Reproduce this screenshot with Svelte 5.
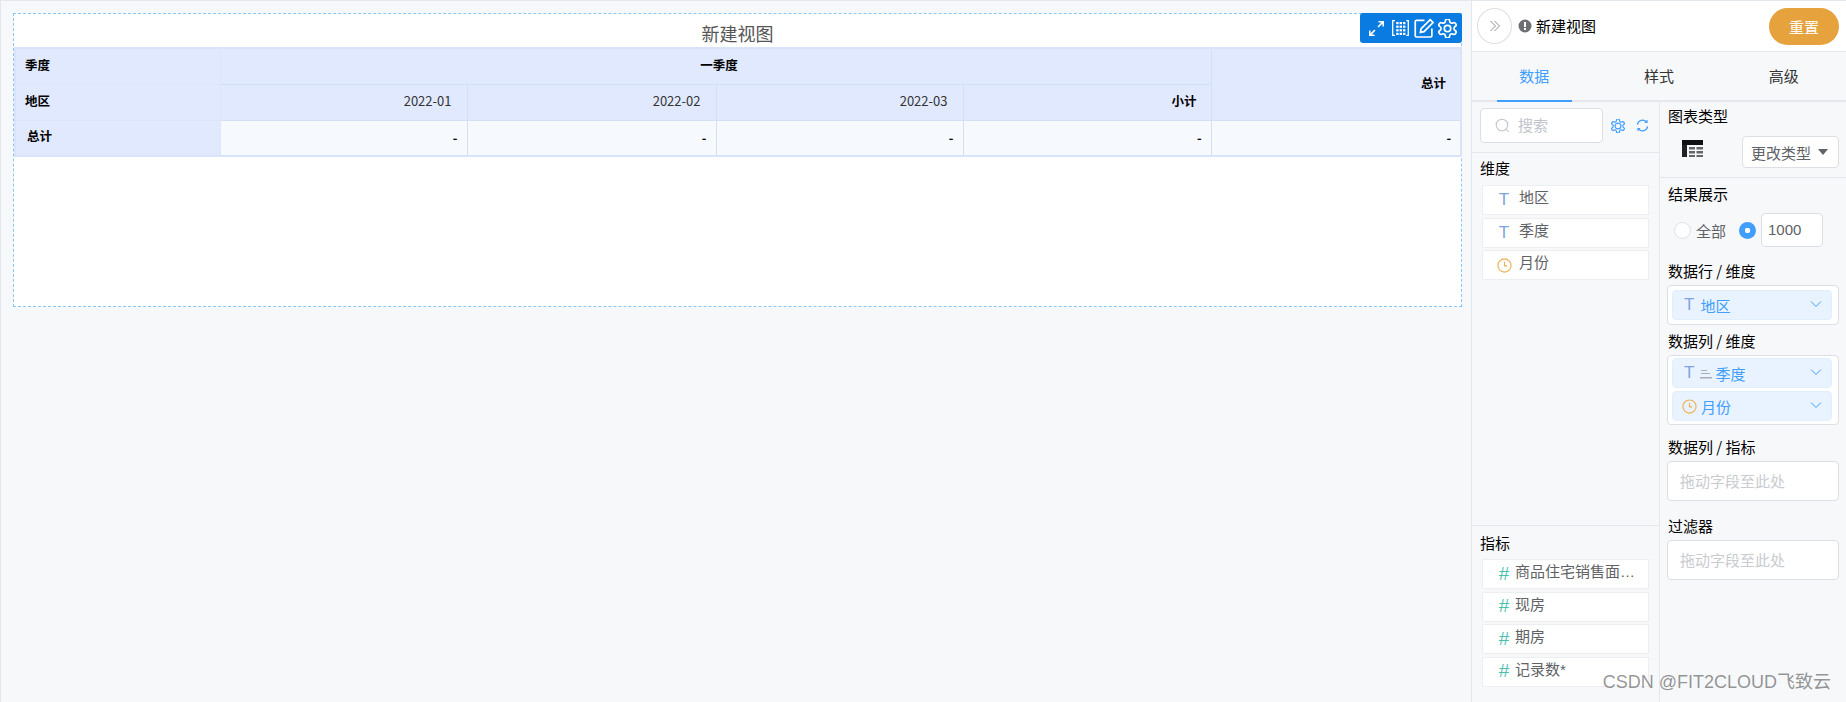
<script>
  const months = ['2022-01', '2022-02', '2022-03'];
  const widths = [205, 247, 249, 247, 248, 250];
  const gearPath =
    'M12.22 2h-.44a2 2 0 0 0-2 2v.18a2 2 0 0 1-1 1.73l-.43.25a2 2 0 0 1-2 0l-.15-.08a2 2 0 0 0-2.73.73l-.22.38a2 2 0 0 0 .73 2.73l.15.1a2 2 0 0 1 1 1.72v.51a2 2 0 0 1-1 1.74l-.15.09a2 2 0 0 0-.73 2.73l.22.38a2 2 0 0 0 2.73.73l.15-.08a2 2 0 0 1 2 0l.43.25a2 2 0 0 1 1 1.73V20a2 2 0 0 0 2 2h.44a2 2 0 0 0 2-2v-.18a2 2 0 0 1 1-1.73l.43-.25a2 2 0 0 1 2 0l.15.08a2 2 0 0 0 2.73-.73l.22-.39a2 2 0 0 0-.73-2.73l-.15-.08a2 2 0 0 1-1-1.74v-.5a2 2 0 0 1 1-1.74l.15-.09a2 2 0 0 0 .73-2.73l-.22-.38a2 2 0 0 0-2.73-.73l-.15.08a2 2 0 0 1-2 0l-.43-.25a2 2 0 0 1-1-1.73V4a2 2 0 0 0-2-2z';
  const dimensions = [
    { type: 'text', name: '地区' },
    { type: 'text', name: '季度' },
    { type: 'time', name: '月份' },
  ];
  const measures = ['商品住宅销售面积(万)', '现房', '期房', '记录数*'];
  // dots of the small table icon in the toolbar
  const dots = [];
  for (const y of [2, 5.6, 9.2, 12.8]) for (const x of [4.2, 7.6, 11]) dots.push({ x, y });
</script>

{#snippet clock(size)}
  <svg class="clock" width={size} height={size} viewBox="0 0 16 16" fill="none" stroke="#f0ad4e" stroke-width="1.2">
    <circle cx="8" cy="8" r="7" />
    <path d="M8 4v4.400h3" />
  </svg>
{/snippet}

{#snippet chevron()}
  <svg class="chev" width="12" height="8" viewBox="0 0 12 8" fill="none" stroke="#409eff" stroke-width="1">
    <path d="M1 1.500l5 5 5-5" />
  </svg>
{/snippet}

<div class="page">
  <main class="canvas">
    <section class="view">
      <div class="toolbar">
        <svg class="tb-expand" width="15" height="15" viewBox="1.500 1.500 15 15" fill="none" stroke="#fff" stroke-width="1.700">
          <path d="M10.500 7.500L15.500 2.500M11 2.200h4.800V7M7.500 10.500L2.500 15.500M2.200 11v4.800H7" />
        </svg>
        <svg class="tb-grid" width="17" height="16" viewBox="0 0 17 16" fill="none" stroke="#fff" stroke-width="1.300">
          <path d="M3 .7H.7v14.600H3M14.300 .7h2v14.600h-2" />
          {#each dots as d}<rect x={d.x} y={d.y} width="2.400" height="2.200" fill="#fff" stroke="none" />{/each}
        </svg>
        <svg class="tb-edit" width="21" height="21" viewBox="0 0 22 22" fill="none" stroke="#fff" stroke-width="1.800">
          <path d="M11 2.500H2.500a1.200 1.200 0 0 0-1.200 1.200v15a1.200 1.200 0 0 0 1.200 1.200h15a1.200 1.200 0 0 0 1.200-1.200V11" />
          <path d="M7.500 11.200L17 1.800l3 3-9.500 9.500-3.800.8z" />
        </svg>
        <svg class="tb-gear" width="19" height="19" viewBox="2 2 20 20" fill="none" stroke="#fff" stroke-width="1.800">
          <path d={gearPath} />
          <circle cx="12" cy="12" r="3.400" />
        </svg>
      </div>
      <h1>新建视图</h1>
      <table>
        <colgroup>
          {#each widths as w}<col style="width:{w}px" />{/each}
        </colgroup>
        <tbody>
          <tr>
            <th class="lead">季度</th>
            <th colspan="4" class="center">一季度</th>
            <th rowspan="2">总计</th>
          </tr>
          <tr>
            <th class="lead">地区</th>
            {#each months as m}<td class="head">{m}</td>{/each}
            <th>小计</th>
          </tr>
          <tr>
            <th class="lead total">总计</th>
            {#each widths.slice(1) as _}<td class="val">-</td>{/each}
          </tr>
        </tbody>
      </table>
    </section>
  </main>

  <aside class="panel">
    <header class="top">
      <button class="toggle" aria-label="收起">
        <svg width="12" height="12" viewBox="0 0 12 12" fill="none" stroke="#8a8f99" stroke-width="1">
          <path d="M1.500 1l5 5-5 5M5.500 1l5 5-5 5" />
        </svg>
      </button>
      <svg class="warn" width="14" height="14" viewBox="0 0 14 14">
        <circle cx="7" cy="7" r="6.500" fill="#6d6f73" />
        <rect x="6" y="3" width="2" height="5" fill="#fff" />
        <rect x="6" y="9" width="2" height="2" fill="#fff" />
      </svg>
      <span class="view-name">新建视图</span>
      <button class="reset">重置</button>
    </header>

    <nav class="tabs">
      <div class="tab active">数据</div>
      <div class="tab">样式</div>
      <div class="tab">高级</div>
    </nav>

    <div class="cols">
      <div class="fields">
        <div class="search-row">
          <div class="search">
            <svg width="15" height="15" viewBox="0 0 15 15" fill="none" stroke="#c0c4cc" stroke-width="1.100">
              <circle cx="7" cy="7" r="5.800" />
              <path d="M11.200 11.200l2.400 2.400" />
            </svg>
            <span>搜索</span>
          </div>
          <svg class="s-gear" width="14" height="14" viewBox="2 2 20 20" fill="none" stroke="#409eff" stroke-width="1.700">
            <path d={gearPath} />
            <circle cx="12" cy="12" r="4.200" />
          </svg>
          <svg width="13" height="13" viewBox="0 0 14 14" fill="none" stroke="#409eff" stroke-width="1.300">
            <path d="M1.500 6A5.600 5.600 0 0 1 11.200 3.200M12.500 8A5.600 5.600 0 0 1 2.800 10.800" />
            <path d="M9.500 3.600h2.400V1.200M4.500 10.400H2.100v2.400" stroke-width="1.200" />
          </svg>
        </div>

        <div class="dims">
          <div class="group-title">维度</div>
          {#each dimensions as d}
            <div class="field">
              <span class="ic">
                {#if d.type === 'text'}<span class="t">T</span>{:else}{@render clock(15)}{/if}
              </span>
              <span class="fname">{d.name}</span>
            </div>
          {/each}
        </div>

        <div class="measures">
          <div class="group-title">指标</div>
          {#each measures as m}
            <div class="field">
              <span class="ic hash">#</span>
              <span class="fname">{m}</span>
            </div>
          {/each}
        </div>
      </div>

      <div class="config">
        <div class="chart-type">
          <div class="label">图表类型</div>
          <div class="type-row">
            <svg class="table-ic" width="21" height="17" viewBox="0 0 21 17">
              <rect width="21" height="5" fill="#111" />
              <rect y="5" width="5" height="12" fill="#222" />
              <path d="M7 7h6v2.600H7zM14.500 7H21v2.600h-6.500zM7 11h6v2.600H7zM14.500 11H21v2.600h-6.500zM7 15h6v2H7zM14.500 15H21v2h-6.500z" fill="#666" />
            </svg>
            <div class="select">更改类型<i class="caret"></i></div>
          </div>
        </div>

        <div class="slots">
          <div class="label">结果展示</div>
          <div class="limit">
            <i class="radio"></i>
            <span class="radio-text">全部</span>
            <i class="radio on"></i>
            <div class="num">1000</div>
          </div>

          <div class="label l-row">数据行 / 维度</div>
          <div class="slot">
            <div class="chip"><span class="t">T</span><span class="cname">地区</span>{@render chevron()}</div>
          </div>

          <div class="label l-col">数据列 / 维度</div>
          <div class="slot stack">
            <div class="chip">
              <span class="t">T</span>
              <svg class="sort" width="12" height="12" viewBox="0 0 12 12"><path d="M1 3h6v1H1zM1 6h9v1H1zM0 10h12v1.500H0z" fill="#a9adb5" /></svg>
              <span class="cname tight">季度</span>{@render chevron()}
            </div>
            <div class="chip timed">{@render clock(15)}<span class="cname near">月份</span>{@render chevron()}</div>
          </div>

          <div class="label l-measure">数据列 / 指标</div>
          <div class="drop">拖动字段至此处</div>

          <div class="label l-filter">过滤器</div>
          <div class="drop">拖动字段至此处</div>
        </div>
      </div>
    </div>
  </aside>

  <div class="watermark">CSDN @FIT2CLOUD飞致云</div>
</div>

<style>
  :global(body) {
    margin: 0;
    background: #f7f8fa;
    font-family: "Noto Sans CJK SC", "Liberation Sans", sans-serif;
  }

  .page {
    position: relative;
    display: flex;
    height: 702px;
    overflow: hidden;
    box-sizing: border-box;
    border-top: 1px solid #e4e7ed;
    background: #f7f8fa;
    font-size: 15px;
    color: #303133;
  }

  .canvas {
    flex: 1;
    min-width: 0;
    padding: 12px 0 0 12px;
    border-left: 1px solid #e4e7ed;
    box-sizing: border-box;
  }

  .view {
    position: relative;
    width: 1449px;
    height: 294px;
    box-sizing: border-box;
    background: #fff;
    border: 1px dashed #85c8f8;
  }

  .toolbar {
    position: absolute;
    top: -1px;
    right: -1px;
    width: 102px;
    height: 30px;
    box-sizing: border-box;
    padding-left: 9px;
    display: flex;
    align-items: center;
    background: #0a7be0;
    border-radius: 3px;
  }

  .tb-grid { margin-left: 8px; }
  .tb-edit { margin-left: 5px; }
  .tb-gear { margin-left: 3px; margin-top: 1px; }

  h1 {
    margin: 0;
    height: 33px;
    line-height: 38px;
    text-align: center;
    font-size: 18px;
    font-weight: 400;
    color: #555;
  }

  table {
    width: 1446px;
    table-layout: fixed;
    border-collapse: collapse;
    font-size: 12.500px;
    color: #000;
    border: 2px solid #d9e4fb;
  }

  tr { height: 36px; }

  th, td {
    padding: 0 14px 3px 12px;
    box-sizing: border-box;
    border: 1px solid #d3dff5;
    background: #e0e9fd;
    text-align: right;
    line-height: 16px;
  }

  th.lead { text-align: left; padding-left: 9px; border-color: #dce6fa; }
  th.center { text-align: center; padding: 0 10px 3px 17px; }
  th.total { padding-left: 11px; }
  td.head { font-size: 13px; font-weight: 400; color: #333; padding-right: 15px; }
  td.val { background: #f6f9fe; font-weight: 700; padding: 0 9px 0 0; }

  .panel {
    width: 375px;
    flex: none;
    box-sizing: border-box;
    border-left: 1px solid #e4e7ed;
    display: flex;
    flex-direction: column;
    color: #000;
  }

  .top {
    height: 51px;
    flex: none;
    box-sizing: border-box;
    background: #fff;
    border-bottom: 1px solid #e4e7ed;
    display: flex;
    align-items: center;
    padding: 0 7px 0 5px;
  }

  .toggle {
    width: 35px;
    height: 36px;
    padding: 0;
    border: 1px solid #dcdfe6;
    border-radius: 50%;
    background: #fff;
    display: flex;
    align-items: center;
    justify-content: center;
  }

  .warn { margin-left: 6px; }

  .view-name {
    margin-left: 4px;
    line-height: 20px;
    flex: 1;
  }

  .reset {
    width: 70px;
    height: 37px;
    padding: 0;
    border: 0;
    border-radius: 19px;
    background: #e6a23c;
    color: #fff;
    font: inherit;
  }

  .tabs {
    height: 50px;
    flex: none;
    box-sizing: border-box;
    display: flex;
    border-bottom: 2px solid #e4e7ed;
  }

  .tab {
    width: 125px;
    height: 50px;
    box-sizing: border-box;
    text-align: center;
    line-height: 48px;
    color: #333;
  }

  .tab.active {
    color: #409eff;
    position: relative;
  }

  .tab.active::after {
    content: '';
    position: absolute;
    left: 25px;
    right: 25px;
    bottom: 0;
    height: 2px;
    background: #409eff;
  }

  .cols {
    flex: 1;
    min-height: 0;
    display: flex;
  }

  .fields {
    width: 188px;
    flex: none;
    box-sizing: border-box;
    border-right: 1px solid #e4e7ed;
    display: flex;
    flex-direction: column;
  }

  .search-row {
    height: 51px;
    flex: none;
    box-sizing: border-box;
    border-bottom: 1px solid #e4e7ed;
    display: flex;
    align-items: center;
    padding: 0 0 3px 8px;
  }

  .search {
    width: 123px;
    height: 35px;
    box-sizing: border-box;
    background: #fff;
    border: 1px solid #dcdfe6;
    border-radius: 4px;
    display: flex;
    align-items: center;
    padding-left: 14px;
    color: #c0c4cc;
  }

  .search span { margin: -2px 0 0 8px; }
  .s-gear { margin: 0 11px 0 8px; }

  .dims {
    flex: 1;
    padding-top: 5px;
    box-sizing: border-box;
    border-bottom: 1px solid #e4e7ed;
  }

  .measures {
    height: 176px;
    flex: none;
    box-sizing: border-box;
    padding-top: 7px;
  }

  .group-title {
    padding-left: 8px;
    height: 20px;
    line-height: 20px;
    margin-bottom: 7px;
  }

  .measures .group-title { margin-bottom: 6px; }

  .field {
    width: 167px;
    height: 30px;
    margin: 0 0 2.500px 10px;
    box-sizing: border-box;
    background: #fff;
    border: 1px solid #eceef2;
    display: flex;
    align-items: center;
    color: #606266;
    white-space: nowrap;
    font-family: "Liberation Sans", "Noto Sans CJK SC", sans-serif;
  }

  .ic {
    width: 16px;
    margin-left: 13px;
    margin-right: 7px;
    flex: none;
    display: flex;
    justify-content: center;
    align-items: center;
  }

  .t {
    font-family: "Liberation Sans", sans-serif;
    font-size: 17px;
    color: #7ea3e0;
    line-height: 20px;
  }

  .hash {
    margin-right: 3px;
    margin-top: -1px;
    font-family: "Liberation Sans", sans-serif;
    font-size: 19px;
    color: #4dbfae;
  }

  .fname {
    flex: 1;
    min-width: 0;
    overflow: hidden;
    text-overflow: ellipsis;
    padding-right: 12px;
    padding-bottom: 4px;
    line-height: 20px;
  }

  .config {
    flex: 1;
    min-width: 0;
  }

  .chart-type {
    height: 76px;
    box-sizing: border-box;
    border-bottom: 1px solid #e4e7ed;
    padding: 4px 0 0 8px;
  }

  .label {
    height: 20px;
    line-height: 20px;
    white-space: nowrap;
  }

  .type-row {
    display: flex;
    align-items: flex-start;
    margin-top: 10px;
  }

  .table-ic { margin: 4px 0 0 14px; }

  .select {
    margin-left: 39px;
    width: 97px;
    height: 32px;
    box-sizing: border-box;
    background: #fff;
    border: 1px solid #dcdfe6;
    border-radius: 4px;
    display: flex;
    align-items: center;
    padding-left: 8px;
    color: #606266;
    white-space: nowrap;
  }

  .caret {
    margin-left: 7px;
    border: 5px solid transparent;
    border-top: 6px solid #606266;
    border-bottom: 0;
  }

  .slots { padding: 6px 7px 0 8px; }

  .limit {
    display: flex;
    align-items: center;
    height: 34px;
    margin-top: 9px;
    padding-left: 6px;
    color: #606266;
  }

  .radio {
    width: 17px;
    height: 17px;
    box-sizing: border-box;
    border: 1px solid #dcdfe6;
    border-radius: 50%;
    background: #fff;
    flex: none;
  }

  .radio.on {
    border: 0;
    background: radial-gradient(circle, #fff 0 2.500px, #409eff 3px);
  }

  .radio-text { margin: 0 13px 0 5px; }

  .num {
    margin-left: 5px;
    width: 62px;
    height: 34px;
    box-sizing: border-box;
    background: #fff;
    border: 1px solid #dcdfe6;
    border-radius: 4px;
    padding-left: 6px;
    line-height: 32px;
    color: #606266;
    font-family: "Liberation Sans", sans-serif;
  }

  .l-row { margin-top: 14px; }
  .l-col { margin-top: 6px; }
  .l-measure { margin-top: 12px; }
  .l-filter { margin-top: 15px; }

  .slot {
    margin: 4px 0 0 -1px;
    box-sizing: border-box;
    width: 172px;
    background: #fff;
    border: 1px solid #dcdfe6;
    border-radius: 4px;
    padding: 4px;
  }

  .slot.stack {
    padding-top: 2px;
    padding-bottom: 3px;
  }

  .slot .chip + .chip { margin-top: 3px; }

  .chip {
    height: 30px;
    box-sizing: border-box;
    width: 160px;
    background: #e9f3ff;
    border: 1px solid #e1effd;
    border-radius: 4px;
    display: flex;
    align-items: center;
    padding-left: 11px;
    color: #409eff;
  }

  .chip.timed { padding-left: 9px; }
  .chip .clock { flex: none; }
  .cname { margin-left: 6px; flex: 1; }
  .cname.tight { margin-left: 3px; }
  .cname.near { margin-left: 4px; }
  .sort { margin-left: 6px; }
  .chev { margin-right: 9px; margin-top: -2px; }

  .drop {
    margin: 4px 0 0 -1px;
    width: 172px;
    height: 40px;
    box-sizing: border-box;
    background: #fff;
    border: 1px solid #dcdfe6;
    border-radius: 4px;
    padding-left: 12px;
    line-height: 38px;
    color: #c9cbd0;
    white-space: nowrap;
  }

  /* site watermark over the corner of the screenshot */
  .watermark {
    position: absolute;
    right: 15px;
    bottom: 8px;
    font-family: "Liberation Sans", "Noto Sans CJK SC", sans-serif;
    font-size: 18px;
    line-height: 24px;
    color: rgba(60, 60, 60, 0.55);
    pointer-events: none;
  }
</style>
